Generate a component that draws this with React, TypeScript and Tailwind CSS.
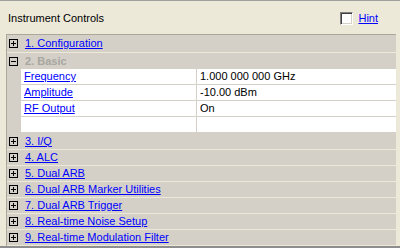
import React from 'react';

const sections = [
  '3. I/Q',
  '4. ALC',
  '5. Dual ARB',
  '6. Dual ARB Marker Utilities',
  '7. Dual ARB Trigger',
  '8. Real-time Noise Setup',
  '9. Real-time Modulation Filter',
];

const params = [
  { name: 'Frequency', value: '1.000 000 000 GHz' },
  { name: 'Amplitude', value: '-10.00 dBm' },
  { name: 'RF Output', value: 'On' },
  { name: '', value: '' },
];

const TreeBox: React.FC<{ open?: boolean }> = ({ open }) => (
  <svg width="9" height="9" viewBox="0 0 9 9" className="shrink-0">
    <rect x="0.5" y="0.5" width="8" height="8" fill="none" stroke="#000" />
    <path d="M2 4.5h5" stroke="#000" />
    {!open && <path d="M4.5 2v5" stroke="#000" />}
  </svg>
);

const SectionRow: React.FC<{ label: string; h: string }> = ({ label, h }) => (
  <div className={`flex items-center gap-[7px] pl-[2px] bg-[#d4d0c8] border-b border-[#ece9d8] ${h}`}>
    <TreeBox />
    <a className="text-[#0000ff] underline underline-offset-[1px] cursor-pointer">{label}</a>
  </div>
);

export default function App() {
  return (
    <div className="w-[400px] h-[248px] bg-[#ece9d8] border-t border-b-2 border-t-[#a0a0a0] border-b-[#8e8e8e] overflow-hidden font-['Liberation_Sans',Arial,sans-serif] text-[11px] leading-none text-black">
      <div className="h-[33px] flex items-center justify-between pl-2 pr-[22px] pt-[2px]">
        <span>Instrument Controls</span>
        <label className="flex items-center gap-[5px]">
          <span className="w-[13px] h-[13px] bg-white border border-t-[#808080] border-l-[#808080] border-b-white border-r-white shadow-[inset_1px_1px_0_#404040,inset_-1px_-1px_0_#d4d0c8]" />
          <a className="text-[#0000ff] underline underline-offset-[1px]">Hint</a>
        </label>
      </div>

      <div className="ml-[6px] w-[390px] border-t border-l border-[#aca899]">
        <SectionRow label="1. Configuration" h="h-[18px]" />
        <div className="flex items-center gap-[7px] pl-[2px] h-[16px] bg-[#d4d0c8]">
          <TreeBox open />
          <span className="font-bold text-[#a7a6a0]">2. Basic</span>
        </div>
        <div className="flex bg-[#d4d0c8]">
          <div className="w-[14px]" />
          <div className="flex-1">
            {params.map((p, i) => (
              <div key={i} className="flex h-[16px] border-b border-[#d4d0c8] bg-white">
                <div className="w-[176px] pl-[3px] flex items-center border-r border-[#d4d0c8]">
                  {p.name && <a className="text-[#0000ff] underline underline-offset-[1px]">{p.name}</a>}
                </div>
                <div className="flex-1 pl-[3px] flex items-center">{p.value}</div>
              </div>
            ))}
          </div>
        </div>
        {sections.map((s, i) => (
          <SectionRow key={s} label={s} h={i === 0 ? 'h-[17px]' : 'h-[16px]'} />
        ))}
      </div>
    </div>
  );
}
